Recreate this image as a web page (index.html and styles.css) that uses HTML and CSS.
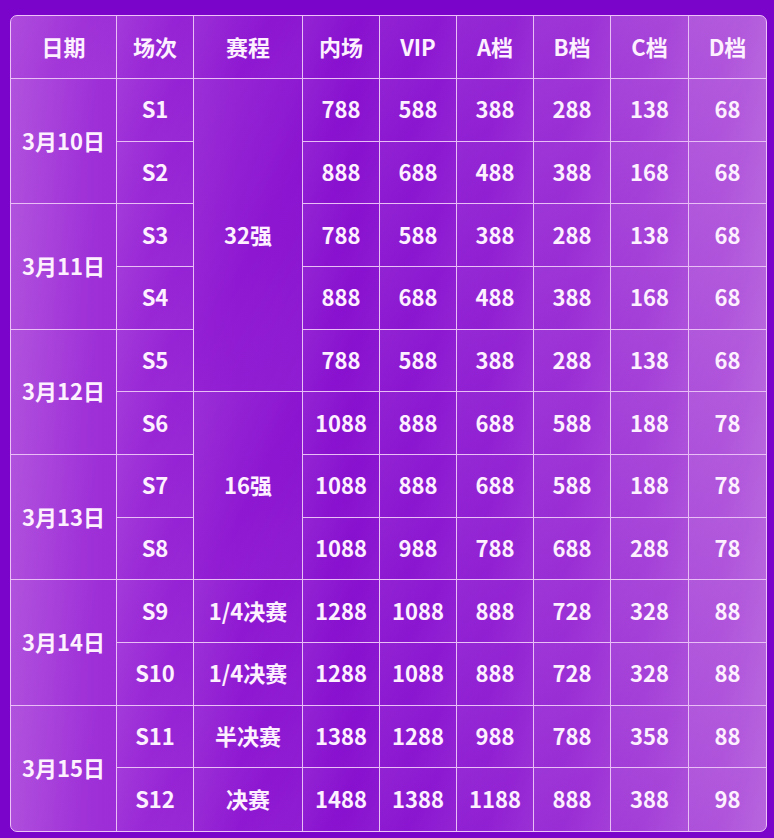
FILE: index.html
```html
<!DOCTYPE html>
<html lang="zh">
<head>
<meta charset="utf-8">
<title>票价表</title>
<link rel="stylesheet" href="styles.css">
</head>
<body>
<div class="board">
  <div class="cell head">日期</div>
  <div class="cell head">场次</div>
  <div class="cell head">赛程</div>
  <div class="cell head">内场</div>
  <div class="cell head">VIP</div>
  <div class="cell head">A档</div>
  <div class="cell head">B档</div>
  <div class="cell head">C档</div>
  <div class="cell head last-col">D档</div>

  <div class="cell date span2">3月10日</div>
  <div class="cell">S1</div>
  <div class="cell stage span5">32强</div>
  <div class="cell">788</div><div class="cell">588</div><div class="cell">388</div><div class="cell">288</div><div class="cell">138</div><div class="cell last-col">68</div>
  <div class="cell">S2</div>
  <div class="cell">888</div><div class="cell">688</div><div class="cell">488</div><div class="cell">388</div><div class="cell">168</div><div class="cell last-col">68</div>

  <div class="cell date span2">3月11日</div>
  <div class="cell">S3</div>
  <div class="cell">788</div><div class="cell">588</div><div class="cell">388</div><div class="cell">288</div><div class="cell">138</div><div class="cell last-col">68</div>
  <div class="cell">S4</div>
  <div class="cell">888</div><div class="cell">688</div><div class="cell">488</div><div class="cell">388</div><div class="cell">168</div><div class="cell last-col">68</div>

  <div class="cell date span2">3月12日</div>
  <div class="cell">S5</div>
  <div class="cell">788</div><div class="cell">588</div><div class="cell">388</div><div class="cell">288</div><div class="cell">138</div><div class="cell last-col">68</div>
  <div class="cell">S6</div>
  <div class="cell stage span3">16强</div>
  <div class="cell">1088</div><div class="cell">888</div><div class="cell">688</div><div class="cell">588</div><div class="cell">188</div><div class="cell last-col">78</div>

  <div class="cell date span2">3月13日</div>
  <div class="cell">S7</div>
  <div class="cell">1088</div><div class="cell">888</div><div class="cell">688</div><div class="cell">588</div><div class="cell">188</div><div class="cell last-col">78</div>
  <div class="cell">S8</div>
  <div class="cell">1088</div><div class="cell">988</div><div class="cell">788</div><div class="cell">688</div><div class="cell">288</div><div class="cell last-col">78</div>

  <div class="cell date span2">3月14日</div>
  <div class="cell">S9</div>
  <div class="cell stage">1/4决赛</div>
  <div class="cell">1288</div><div class="cell">1088</div><div class="cell">888</div><div class="cell">728</div><div class="cell">328</div><div class="cell last-col">88</div>
  <div class="cell">S10</div>
  <div class="cell stage">1/4决赛</div>
  <div class="cell">1288</div><div class="cell">1088</div><div class="cell">888</div><div class="cell">728</div><div class="cell">328</div><div class="cell last-col">88</div>

  <div class="cell date span2 last-row">3月15日</div>
  <div class="cell">S11</div>
  <div class="cell stage">半决赛</div>
  <div class="cell">1388</div><div class="cell">1288</div><div class="cell">988</div><div class="cell">788</div><div class="cell">358</div><div class="cell last-col">88</div>
  <div class="cell last-row">S12</div>
  <div class="cell stage last-row">决赛</div>
  <div class="cell last-row">1488</div><div class="cell last-row">1388</div><div class="cell last-row">1188</div><div class="cell last-row">888</div><div class="cell last-row">388</div><div class="cell last-col last-row">98</div>
</div>
</body>
</html>
```

FILE: styles.css
```css
html, body {
  margin: 0;
  padding: 0;
}

body {
  width: 774px;
  height: 838px;
  background: #7a04c9;
  font-family: "Noto Sans CJK SC", "Noto Sans", sans-serif;
  overflow: hidden;
}

.board {
  margin: 15px 0 0 10px;
  width: 755px;
  display: grid;
  grid-template-columns: 106px 77px 109px 77px 77px 77px 77px 78px 77px;
  grid-template-rows: 63px repeat(12, 62.67px);
  border: 1px solid #edc2f8;
  border-radius: 7px;
  overflow: hidden;
  background: linear-gradient(90deg, #a83fda 0%, #9c2cd7 14%, #8f19d2 30%, #8810cf 45%, #8e1bd2 60%, #9e34d6 78%, #b55fdd 100%);
}

.cell {
  display: flex;
  align-items: center;
  justify-content: center;
  padding-bottom: 3px;
  border-right: 1px solid #e9bdf6;
  border-bottom: 1px solid #e9bdf6;
  color: #fdf0ff;
  font-size: 22px;
  font-weight: 700;
  background: linear-gradient(120deg, rgba(255, 255, 255, 0.07) 0%, rgba(255, 255, 255, 0) 55%, rgba(255, 255, 255, 0.04) 100%);
  white-space: nowrap;
}

.head {
  font-size: 22px;
}

.date {
  background: linear-gradient(100deg, rgba(255, 255, 255, 0.1) 0%, rgba(255, 255, 255, 0) 70%);
}

.span2 {
  grid-row: span 2;
}

.span3 {
  grid-row: span 3;
}

.span5 {
  grid-row: span 5;
}

.last-col {
  border-right: none;
}

.last-row {
  border-bottom: none;
}
```
